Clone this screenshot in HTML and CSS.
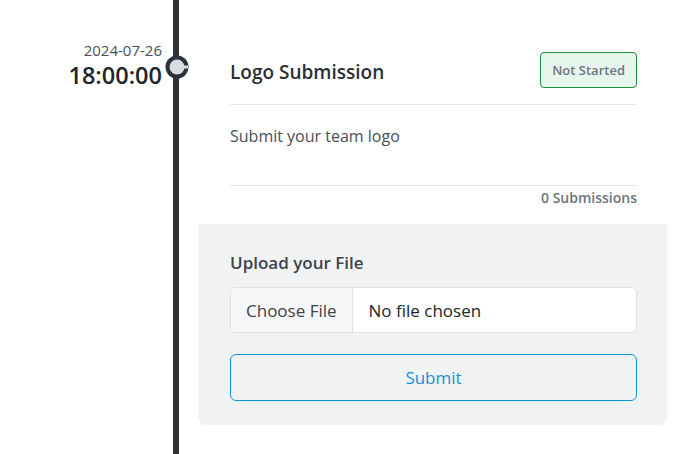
FILE: index.html
```html
<!DOCTYPE html>
<html>
<head>
<meta charset="utf-8">
<link rel="stylesheet" href="styles.css">
</head>
<body>
<div class="timeline">
  <div class="when">
    <div class="date">2024-07-26</div>
    <div class="time">18:00:00</div>
  </div>
  <div class="rail">
    <svg class="dot" width="24" height="24" viewBox="0 0 24 24">
      <circle cx="12" cy="12" r="11.5" fill="#2b3238"/>
      <circle cx="12" cy="12" r="7.5" fill="#d9dde3"/>
      <rect x="18" y="10.5" width="5" height="3" fill="#d9dde3"/>
    </svg>
  </div>
  <div class="card">
    <div class="card-top">
      <div class="card-head">
        <h2 class="title">Logo Submission</h2>
        <span class="badge">Not Started</span>
      </div>
      <hr class="sep">
      <p class="desc">Submit your team logo</p>
      <hr class="sep sep-low">
      <div class="count">0 Submissions</div>
    </div>
    <div class="card-bottom">
      <div class="label">Upload your File</div>
      <div class="file">
        <span class="file-btn">Choose File</span>
        <span class="file-name">No file chosen</span>
      </div>
      <button class="submit">Submit</button>
    </div>
  </div>
</div>
</body>
</html>
```

FILE: styles.css
```css
html, body {
  margin: 0;
  padding: 0;
  background: #fff;
  font-family: "Open Sans", "Noto Sans", sans-serif;
  color: #212529;
}
.timeline {
  display: flex;
  height: 454px;
}
.when {
  width: 162px;
  text-align: right;
  padding-top: 40px;
  box-sizing: border-box;
}
.date {
  font-size: 15px;
  line-height: 20px;
  color: #495057;
}
.time {
  font-size: 23.5px;
  line-height: 30px;
  font-weight: 600;
  color: #212529;
  margin-top: 0;
}
.rail {
  width: 28px;
  position: relative;
  background: linear-gradient(to right, transparent 11px, #2b3238 11px, #2b3238 17px, transparent 17px);
}
.dot {
  position: absolute;
  left: 3px;
  top: 55px;
}
.card {
  margin-left: 8px;
  width: 469px;
  align-self: flex-start;
  margin-top: 20px;
}
.card-top {
  padding: 32px 30px 0 32px;
}
.card-head {
  display: flex;
  align-items: center;
  justify-content: space-between;
  height: 36px;
}
.title {
  margin: 3px 0 0;
  font-size: 19px;
  font-weight: 600;
  color: #2b2f33;
}
.badge {
  box-sizing: border-box;
  height: 36px;
  padding: 0 11px;
  display: flex;
  align-items: center;
  font-size: 13px;
  font-weight: 600;
  color: #6c757d;
  background: #e7f6ec;
  border: 1px solid #1f8f3a;
  border-radius: 4px;
}
.sep {
  border: 0;
  border-top: 1px solid #e3e6ea;
  margin: 16px 0 0;
}
.desc {
  margin: 19px 0 0;
  font-size: 16px;
  line-height: 24px;
  color: #495057;
}
.sep-low {
  margin-top: 37px;
}
.count {
  text-align: right;
  font-size: 14px;
  line-height: 21px;
  font-weight: 600;
  color: #6c757d;
  margin-top: 1px;
  padding-bottom: 16px;
}
.card-bottom {
  background: #f1f2f4;
  border-radius: 0 0 8px 8px;
  padding: 27px 30px 24px 32px;
}
.label {
  font-size: 17px;
  line-height: 24px;
  font-weight: 600;
  color: #3d4349;
}
.file {
  margin-top: 12px;
  display: flex;
  height: 46px;
  box-sizing: border-box;
  border: 1px solid #dee2e6;
  border-radius: 6px;
  background: #fff;
  overflow: hidden;
  font-size: 17px;
  color: #212529;
}
.file-btn {
  display: flex;
  align-items: center;
  padding: 0 15px;
  background: #f6f7f8;
  border-right: 1px solid #dee2e6;
  color: #3d4349;
}
.file-name {
  display: flex;
  align-items: center;
  padding: 0 16px;
}
.submit {
  display: block;
  width: 100%;
  margin-top: 21px;
  height: 47px;
  box-sizing: border-box;
  background: transparent;
  border: 1px solid #0d96e0;
  border-radius: 6px;
  color: #1592d8;
  font-family: inherit;
  font-size: 17px;
}
```
